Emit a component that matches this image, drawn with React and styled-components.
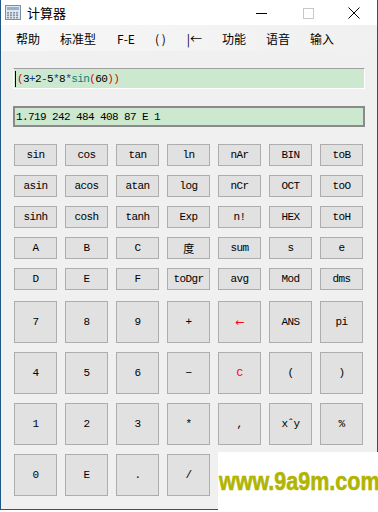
import styled, { createGlobalStyle } from "styled-components"

const GlobalStyle = createGlobalStyle`
    html, body {
        margin: 0;
        padding: 0;
        background: #ffffff;
    }
`

const Window = styled.div`
    position: relative;
    width: 378px;
    height: 510px;
    box-sizing: border-box;
    border: 1px solid #1f5688;
    border-top: none;
    background-color: #f0f0f0;
    display: flex;
    flex-direction: column;
    font-family: "Noto Sans CJK SC", "Noto Sans", sans-serif;
`

const TitleBar = styled.div`
    height: 25px;
    background-color: #ffffff;
    display: flex;
    align-items: center;
    padding-left: 4px;
`

const Title = styled.span`
    font-size: 13px;
    color: #000;
    margin-left: 6px;
    flex: 1;
`

const Caption = styled.div`
    width: 46px;
    height: 25px;
    display: flex;
    align-items: center;
    justify-content: center;
`

const MenuBar = styled.div`
    height: 26px;
    background: linear-gradient(90deg, #f7f7f7, #f0f0f0);
    display: flex;
    align-items: center;
    padding-left: 15px;
`

const MenuItem = styled.span`
    font-size: 12px;
    color: #000;
    margin-right: ${(p) => p.gap}px;
    white-space: pre;
`

const Content = styled.div`
    padding: 17px 12px 0 12px;
    display: flex;
    flex-direction: column;
`

const Display = styled.div`
    height: 21px;
    box-sizing: border-box;
    background-color: #cce8cf;
    border: ${(p) => (p.result ? "2px solid #8a8a8a" : "1px solid #ffffff")};
    border-top-color: ${(p) => (p.result ? "#8a8a8a" : "#a0a0a0")};
    display: flex;
    align-items: center;
    padding-left: 1px;
    margin-bottom: ${(p) => p.mb}px;
    font-family: "Liberation Mono", monospace;
    font-size: 11px;
    letter-spacing: -0.6px;
    white-space: pre;
    color: #000;
`

const Caret = styled.span`
    width: 1px;
    height: 16px;
    background: #000;
    margin-right: 1px;
`

const Tok = styled.span`
    color: ${(p) => p.c || "#000"};
`

const KeyGrid = styled.div`
    display: grid;
    grid-template-columns: repeat(7, 43px);
    grid-auto-rows: ${(p) => p.h}px;
    column-gap: 8px;
    row-gap: 9px;
    padding-left: 1px;
    margin-bottom: ${(p) => p.mb}px;
`

const Key = styled.div`
    box-sizing: border-box;
    background-color: #e1e1e1;
    border: 1px solid #adadad;
    display: flex;
    align-items: center;
    justify-content: center;
    font-family: "Liberation Mono", "Noto Sans CJK SC", monospace;
    font-size: 11px;
    letter-spacing: -0.6px;
    color: ${(p) => (p.red ? "#ff0000" : "#000")};
`

const Arrow = styled.span`
    font-family: "DejaVu Sans", sans-serif;
    letter-spacing: 0;
`

const Watermark = styled.div`
    position: absolute;
    left: 217px;
    top: 452px;
    width: 161px;
    height: 60px;
    background: #ffffff;
    overflow: hidden;
    display: flex;
    align-items: center;
`

const WatermarkText = styled.span`
    font-family: "Liberation Sans", sans-serif;
    font-weight: 700;
    font-size: 25px;
    color: #b1b400;
    -webkit-text-stroke: 0.6px #b1b400;
    white-space: nowrap;
    transform: scaleX(0.86);
    transform-origin: left center;
    margin-left: 1px;
    margin-top: -1px;
`

const small = [
    ["sin", "cos", "tan", "ln", "nAr", "BIN", "toB"],
    ["asin", "acos", "atan", "log", "nCr", "OCT", "toO"],
    ["sinh", "cosh", "tanh", "Exp", "n!", "HEX", "toH"],
    ["A", "B", "C", "度", "sum", "s", "e"],
    ["D", "E", "F", "toDgr", "avg", "Mod", "dms"],
]

const big = [
    ["7", "8", "9", "+", "←", "ANS", "pi"],
    ["4", "5", "6", "−", "C", "(", ")"],
    ["1", "2", "3", "*", ",", "xˆy", "%"],
    ["0", "E", ".", "/", "", "", ""],
]

const menus = [
    ["帮助", 20],
    ["标准型", 21],
    ["F-E", 20],
    ["( )", 21],
    ["|←", 20],
    ["功能", 20],
    ["语音", 20],
    ["输入", 0],
]

const CalcIcon = () => (
    <svg width="16" height="15" viewBox="0 0 16 15">
        <rect x="0.5" y="0.5" width="15" height="14" fill="#dfe6ee" stroke="#7d8ea3" />
        <rect x="2" y="2" width="12" height="3" fill="#8fb2d8" />
        {[0, 1, 2].map((r) =>
            [0, 1, 2, 3].map((c) => (
                <rect key={r + "-" + c} x={2 + c * 3} y={7 + r * 2.4} width="2" height="1.6" fill="#8a96a6" />
            ))
        )}
    </svg>
)

const App = () => {
    return (
        <>
            <GlobalStyle />
            <Window>
                <TitleBar>
                    <CalcIcon />
                    <Title>计算器</Title>
                    <Caption>
                        <svg width="12" height="12"><line x1="0" y1="6.5" x2="11" y2="6.5" stroke="#000" /></svg>
                    </Caption>
                    <Caption>
                        <svg width="12" height="12"><rect x="1.5" y="1.5" width="10" height="10" fill="none" stroke="#c8c8c8" /></svg>
                    </Caption>
                    <Caption>
                        <svg width="12" height="12"><path d="M0.5 0.5 L11.5 11.5 M11.5 0.5 L0.5 11.5" stroke="#000" /></svg>
                    </Caption>
                </TitleBar>
                <MenuBar>
                    {menus.map(([m, g]) => (
                        <MenuItem key={m} gap={g}>{m}</MenuItem>
                    ))}
                </MenuBar>
                <Content>
                    <Display mb={17}>
                        <Caret />
                        <Tok c="#e00000">(</Tok>
                        <Tok>3</Tok>
                        <Tok c="#0b3f8c">+</Tok>
                        <Tok>2</Tok>
                        <Tok c="#0b3f8c">-</Tok>
                        <Tok>5</Tok>
                        <Tok c="#0b3f8c">*</Tok>
                        <Tok>8</Tok>
                        <Tok c="#0b3f8c">*</Tok>
                        <Tok c="#0a8080">sin</Tok>
                        <Tok c="#e00000">(</Tok>
                        <Tok>60</Tok>
                        <Tok c="#e00000">))</Tok>
                    </Display>
                    <Display result mb={17}>1.719 242 484 408 87 E 1</Display>
                    <KeyGrid h={22} mb={11}>
                        {small.flat().map((k, i) => (
                            <Key key={i}>{k}</Key>
                        ))}
                    </KeyGrid>
                    <KeyGrid h={42} mb={0}>
                        {big.flat().map((k, i) => (
                            <Key key={i} red={k === "←" || k === "C"}>
                                {k === "←" ? <Arrow>←</Arrow> : k}
                            </Key>
                        ))}
                    </KeyGrid>
                </Content>
                <Watermark>
                    <WatermarkText>www.9a9m.com</WatermarkText>
                </Watermark>
            </Window>
        </>
    )
}

export default App
